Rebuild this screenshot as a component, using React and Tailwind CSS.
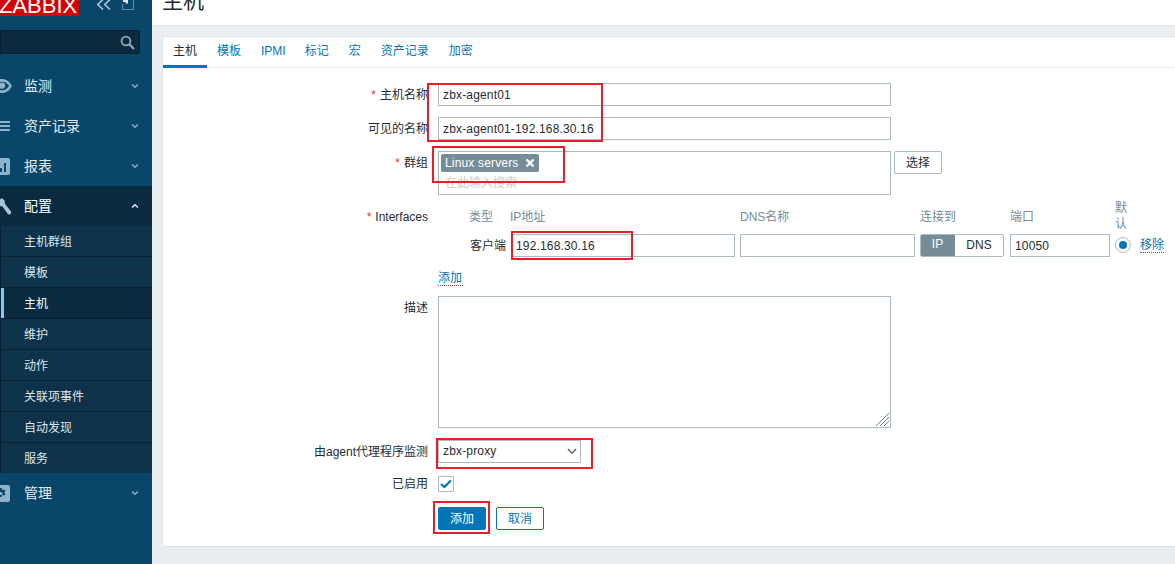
const inputCls = "border border-[#acbbc2] bg-white h-[23px] px-[4px] text-[12px] tracking-[0.16px] text-[#1f2c33] outline-none block";

function Chevron({ up }) {
  return (
    <svg width="8" height="6" viewBox="0 0 8 6" className="mr-[13px] ml-auto" fill="none" stroke={up ? "#e6edf1" : "#8fb0c4"} strokeWidth="1.4">
      {up ? <path d="M1 4.5 4 1.7 7 4.5" /> : <path d="M1 1.5 4 4.3 7 1.5" />}
    </svg>
  );
}

const icons = {
  eye: (
    <svg width="20" height="16" viewBox="0 0 20 16" className="-ml-[8px]"><path d="M0 8C2.500 3.400 6 1 10 1s7.500 2.400 10 7c-2.500 4.600-6 7-10 7S2.500 12.600 0 8Z" fill="#8fb3ca" /><path d="M3 8c1.500-2.600 3.500-4.200 7-4.200S15.500 5.400 17 8c-1.500 2.600-3.500 4.200-7 4.200S4.500 10.600 3 8Z" fill="#0a466a" /><circle cx="10" cy="7.600" r="3.100" fill="#8fb3ca" /></svg>
  ),
  list: (
    <svg width="10" height="12" viewBox="0 0 10 12"><path d="M0 2h10M0 6h10M0 10h10" stroke="#8fb3ca" strokeWidth="1.800" /></svg>
  ),
  chart: (
    <svg width="10" height="17" viewBox="0 0 10 17"><path d="M0 0h8a2 2 0 0 1 2 2v13a2 2 0 0 1-2 2H0Z" fill="#8fb3ca" /><path d="M0 10h2v4H0ZM4 5h2v9H4Z" fill="#0a466a" /></svg>
  ),
  wrench: (
    <svg width="11" height="17" viewBox="0 0 11 17"><path d="M0 1.500 2 0 4.500 2.500 5 6 10.600 13a2 2 0 0 1-3 2.800L2.500 8.500 0 8Z" fill="#a9c4d4" /></svg>
  ),
  gear: (
    <svg width="10" height="17" viewBox="0 0 10 17"><path d="M0 0h8a2 2 0 0 1 2 2v13a2 2 0 0 1-2 2H0Z" fill="#8fb3ca" /><path d="M0 3h1.500l.8 2 2-.6 1.200 1.600-1.300 1.500 1.300 1.500-1.200 1.600-2-.6-.8 2H0Z" fill="#0a466a" /><circle cx="1" cy="8.500" r="1.600" fill="#8fb3ca" /></svg>
  ),
};

function MenuItem({ icon, label, active }) {
  return (
    <div className={"flex items-center h-10 " + (active ? "bg-[#0a2b3f] text-white" : "text-[#e4edf2]")}>
      <div className="w-6 shrink-0 flex items-center">{icons[icon]}</div>
      <span className="text-[14px]">{label}</span>
      <Chevron up={active} />
    </div>
  );
}

function SubItem({ label, active }) {
  return (
    <div className={"flex items-center h-[31px] border-b border-[#08202f] text-[12px] " + (active ? "bg-[#0a2b3f] text-white" : "bg-[#0e3249] text-[#dce7ed]")}>
      <div className={"w-[4px] h-full shrink-0 border-l border-[#08202f] " + (active ? "bg-[#85c8f5]" : "")} />
      <span className="ml-[20px] pt-[1px]">{label}</span>
    </div>
  );
}

function Sidebar() {
  return (
    <aside className="w-[152px] shrink-0 bg-[#0a466a] h-[564px] overflow-hidden">
      <div className="flex items-start h-[30px]">
        <div className="w-[79px] h-[16px] bg-[#d40000] overflow-hidden shrink-0">
          <div className="text-white text-[22px] leading-[22px] -mt-[5px] -ml-[1px] whitespace-nowrap">ZABBIX</div>
        </div>
        <svg width="16" height="12" viewBox="0 0 16 12" className="ml-[17px] -mt-[1px]" fill="none" stroke="#a9c4d4" strokeWidth="1.700"><path d="M7 0.500 1.800 5.500 7 10.500M14 0.500 8.800 5.500 14 10.500" /></svg>
        <svg width="12" height="14" viewBox="0 0 12 14" className="ml-[10px] -mt-[4px]" fill="none"><path d="M6.500 3.500H11.500V13.500H0.500V8" stroke="#c5d6e0" strokeDasharray="1 1" /><path d="M1 3h5v4.500H3.500V6H1Z" fill="#dce7ed" /></svg>
      </div>
      <div className="h-[24px] w-[140px] bg-[#0b2a3d] border border-[#07202f] rounded-r-[2px] flex items-center justify-end pr-[4px]">
        <svg width="15" height="15" viewBox="0 0 15 15" fill="none" stroke="#8fa9b8" strokeWidth="1.800"><circle cx="6" cy="6" r="4.400" /><path d="M9.400 9.400 14 14" strokeWidth="2.200" /></svg>
      </div>
      <div className="mt-[12px]">
        <MenuItem icon="eye" label="监测" />
        <MenuItem icon="list" label="资产记录" />
        <MenuItem icon="chart" label="报表" />
        <MenuItem icon="wrench" label="配置" active />
        <div className="h-[247px] overflow-hidden">
          <SubItem label="主机群组" />
          <SubItem label="模板" />
          <SubItem label="主机" active />
          <SubItem label="维护" />
          <SubItem label="动作" />
          <SubItem label="关联项事件" />
          <SubItem label="自动发现" />
          <SubItem label="服务" />
        </div>
        <MenuItem icon="gear" label="管理" />
      </div>
    </aside>
  );
}

function Label({ children, req, className = "" }) {
  return (
    <div className={"w-[275px] shrink-0 pr-[10px] text-right text-[12px] text-[#1f2c33] whitespace-nowrap " + className}>
      {req && <span className="text-[#e33734] mr-[4px]">*</span>}
      {children}
    </div>
  );
}

function Box({ className }) {
  return <div className={"absolute border-2 border-[#ee1c25] pointer-events-none " + className} />;
}

export default function App() {
  return (
    <div className="relative w-[1175px] h-[564px] overflow-hidden flex bg-[#ebeef0] text-[#1f2c33] font-['Liberation_Sans','Noto_Sans_CJK_SC',sans-serif]">
      <Sidebar />
      <main className="flex-1 min-w-0">
        <header className="h-[26px] bg-white border-b border-[#dfe4e7] overflow-hidden pl-[10px]">
          <div className="text-[21px] leading-[24px] -mt-[11px] text-[#1f2c33]">主机</div>
        </header>
        <section className="ml-[10px] mt-[10px] h-[511px] bg-white border border-[#dfe4e7] border-r-0">
          <nav className="flex h-[31px] border-b border-[#ebeef0] text-[12px]">
            <div className="px-[10px] h-[31px] leading-[29px] border-b-[3px] border-[#0275b8] text-[#1f2c33]">主机</div>
            <div className="px-[10px] leading-[29px] text-[#0275b8]">模板</div>
            <div className="pl-[10px] pr-[9px] leading-[29px] text-[#0275b8]">IPMI</div>
            <div className="px-[10px] leading-[29px] text-[#0275b8]">标记</div>
            <div className="px-[10px] leading-[29px] text-[#0275b8]">宏</div>
            <div className="px-[10px] leading-[29px] text-[#0275b8]">资产记录</div>
            <div className="px-[10px] leading-[29px] text-[#0275b8]">加密</div>
          </nav>

          <div className="pt-[15px]">
            <div className="flex items-center h-[23px]">
              <Label req>主机名称</Label>
              <input readOnly value="zbx-agent01" className={inputCls + " w-[453px]"} />
            </div>
            <div className="flex items-center h-[23px] mt-[11px]">
              <Label>可见的名称</Label>
              <input readOnly value="zbx-agent01-192.168.30.16" className={inputCls + " w-[453px]"} />
            </div>
            <div className="flex items-start mt-[11px]">
              <Label req className="pt-[3px]">群组</Label>
              <div className="w-[453px] h-[44px] border border-[#acbbc2] pl-[2px] pt-[2px]">
                <div className="flex items-center w-[98px] h-[18px] bg-[#768d99] rounded-[2px] text-white text-[12px] tracking-[0.16px] pl-[4px]">
                  <span>Linux servers</span>
                  <svg width="10" height="10" viewBox="0 0 10 10" className="ml-[7px]"><path d="M1.500 1.500 8.500 8.500M8.500 1.500 1.500 8.500" stroke="#fff" strokeWidth="2.400" /></svg>
                </div>
                <div className="text-[12px] text-[#c9d0d4] leading-[14px] mt-[4px] pl-[4px]">在此输入搜索</div>
              </div>
              <button className="ml-[3px] w-[48px] h-[23px] border border-[#acbbc2] rounded-[2px] text-[12px] text-[#1f2c33] bg-white">选择</button>
            </div>

            <div className="flex items-start mt-[11px]">
              <Label req className="pt-[2px]">Interfaces</Label>
              <div>
                <div className="flex items-end h-[20px] text-[12px] text-[#768d99] leading-[15px]">
                  <div className="w-[72px] pl-[31px] pb-[1px]">类型</div>
                  <div className="w-[230px] pb-[1px]">IP地址</div>
                  <div className="w-[180px] pb-[1px]">DNS名称</div>
                  <div className="w-[90px] pb-[1px]">连接到</div>
                  <div className="w-[105px] pb-[1px]">端口</div>
                  <div className="w-[14px] -mb-[6px] leading-[16px]">默认</div>
                </div>
                <div className="flex items-center h-[23px] mt-[8px]">
                  <div className="w-[68px] pt-[1px] text-right text-[12px] text-[#1f2c33]">客户端</div>
                  <input readOnly value="192.168.30.16" className={inputCls + " w-[224px] ml-[5px]"} />
                  <input readOnly className={inputCls + " w-[175px] ml-[5px]"} />
                  <div className="flex w-[84px] h-[23px] ml-[5px] border border-[#acbbc2] rounded-[2px] text-[12px] overflow-hidden">
                    <div className="w-[35px] bg-[#768d99] text-white text-center leading-[21px] -ml-px -my-px h-[23px]">IP</div>
                    <div className="flex-1 text-center leading-[21px]">DNS</div>
                  </div>
                  <input readOnly value="10050" className={inputCls + " w-[100px] ml-[6px]"} />
                  <div className="w-[16px] h-[16px] ml-[5px] -mt-[1px] rounded-full border border-[#acbbc2] flex items-center justify-center shrink-0">
                    <div className="w-[8px] h-[8px] rounded-full bg-[#0275b8]" />
                  </div>
                  <div className="ml-[9px] text-[12px] text-[#0275b8] border-b border-dotted border-[#0275b8] leading-[14px] whitespace-nowrap">移除</div>
                </div>
                <div className="mt-[14px] text-[12px] text-[#0275b8] border-b border-dotted border-[#0275b8] leading-[14px] w-[25px]">添加</div>
              </div>
            </div>

            <div className="flex items-start mt-[10px]">
              <Label className="pt-[3px]">描述</Label>
              <div className="relative w-[453px] h-[132px] border border-[#acbbc2]">
                <svg width="15" height="15" viewBox="0 0 15 15" className="absolute right-0 bottom-0" stroke="#6b7c85" strokeWidth="1"><path d="M14 1 1 14M14 5 5 14M14 9 9 14" /></svg>
              </div>
            </div>

            <div className="flex items-center mt-[12px] h-[23px]">
              <Label>由agent代理程序监测</Label>
              <div className="w-[143px] h-[23px] border border-[#acbbc2] flex items-center pl-[4px] pb-[1px] text-[12px] tracking-[0.16px]">
                <span>zbx-proxy</span>
                <svg width="10" height="7" viewBox="0 0 10 7" className="ml-auto mr-[3px]" fill="none" stroke="#5d6c74" strokeWidth="1.600"><path d="M1 1 5 5.200 9 1" /></svg>
              </div>
            </div>
            <div className="flex items-center mt-[13px] h-[16px]">
              <Label>已启用</Label>
              <div className="w-[16px] h-[16px] border border-[#acbbc2] rounded-[1px] flex items-center justify-center">
                <svg width="12" height="10" viewBox="0 0 12 10" fill="none" stroke="#0275b8" strokeWidth="2.200"><path d="M1 5 4.400 8 11 1.500" /></svg>
              </div>
            </div>
            <div className="flex mt-[15px] ml-[275px] gap-[10px] text-[12px]">
              <button className="w-[48px] h-[23px] rounded-[2px] bg-[#0275b8] text-white">添加</button>
              <button className="w-[48px] h-[23px] rounded-[2px] bg-white border border-[#0275b8] text-[#0275b8]">取消</button>
            </div>
          </div>
        </section>
      </main>

      <Box className="left-[427px] top-[83px] w-[176px] h-[59px]" />
      <Box className="left-[432px] top-[146px] w-[133px] h-[37px]" />
      <Box className="left-[511px] top-[231px] w-[122px] h-[29px]" />
      <Box className="left-[436px] top-[438px] w-[157px] h-[31px]" />
      <Box className="left-[433px] top-[501px] w-[57px] h-[33px]" />
    </div>
  );
}
